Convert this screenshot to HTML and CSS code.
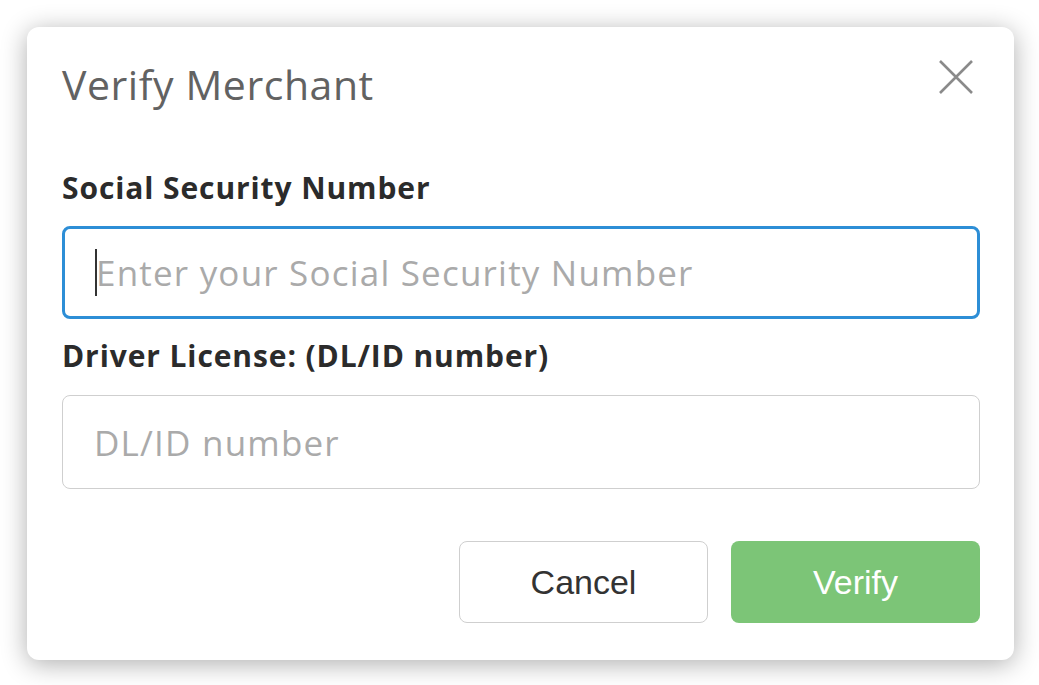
FILE: index.html
```html
<!DOCTYPE html>
<html>
<head>
<meta charset="utf-8">
<link rel="stylesheet" href="styles.css">
</head>
<body>
<div class="dialog">
  <div class="header">
    <h1 class="title">Verify Merchant</h1>
    <button class="close" aria-label="Close">
      <svg width="36" height="36" viewBox="0 0 36 36"><path d="M2 2 L34 34 M34 2 L2 34" stroke="#8a8a8a" stroke-width="2.6" fill="none"/></svg>
    </button>
  </div>
  <label class="label label-first">Social Security Number</label>
  <div class="input focused"><span class="caret"></span><span class="ph">Enter your Social Security Number</span></div>
  <label class="label label-second">Driver License: (DL/ID number)</label>
  <div class="input"><span class="ph">DL/ID number</span></div>
  <div class="actions">
    <button class="btn btn-cancel">Cancel</button>
    <button class="btn btn-verify">Verify</button>
  </div>
</div>
</body>
</html>
```
FILE: styles.css
```css
html, body { margin: 0; padding: 0; background: #fff; }
body { width: 1039px; height: 685px; overflow: hidden; font-family: "Open Sans", "Liberation Sans", sans-serif; }
.dialog {
  margin: 27px 0 0 27px;
  width: 987px;
  height: 633px;
  box-sizing: border-box;
  background: #fff;
  border-radius: 12px;
  box-shadow: 0 4px 26px rgba(0,0,0,0.32);
  padding: 35px 34px 0 35px;
  display: flex;
  flex-direction: column;
}
.header { display: flex; justify-content: space-between; align-items: flex-start; height: 48px; }
.title { margin: 0; font-size: 41px; line-height: 44px; font-weight: 400; color: #626262; letter-spacing: 0.55px; }
.close { border: 0; background: none; padding: 0; margin: -3px 6px 0 0; width: 36px; height: 36px; }
.close svg { display: block; }
.label { display: block; font-size: 30px; line-height: 40px; font-weight: 700; color: #2b2b2b; letter-spacing: 0.9px; white-space: nowrap; }
.label-first { margin-top: 58px; }
.label-second { margin-top: 17px; }
.input {
  margin-top: 19px;
  height: 94px;
  box-sizing: border-box;
  border: 1px solid #cfcfcf;
  border-radius: 8px;
  display: flex;
  align-items: center;
  padding-left: 31px;
  font-size: 35px;
  letter-spacing: 1.2px;
  color: #aaa;
}
.input.focused { margin-top: 18px; height: 93px; border: 3px solid #2d8ed6; padding-left: 30px; }
.caret { width: 2px; height: 47px; background: #333; margin-right: -1px; }
.ph { white-space: nowrap; }
.actions { display: flex; justify-content: flex-end; gap: 23px; margin-top: 52px; }
.btn {
  width: 249px; height: 82px; border-radius: 8px; box-sizing: border-box;
  font-family: "Liberation Sans", Arial, sans-serif; font-size: 34px;
}
.btn-cancel { background: #fff; border: 1px solid #cfcfcf; color: #333; }
.btn-verify { background: #7cc577; border: 0; color: #fff; }
```
